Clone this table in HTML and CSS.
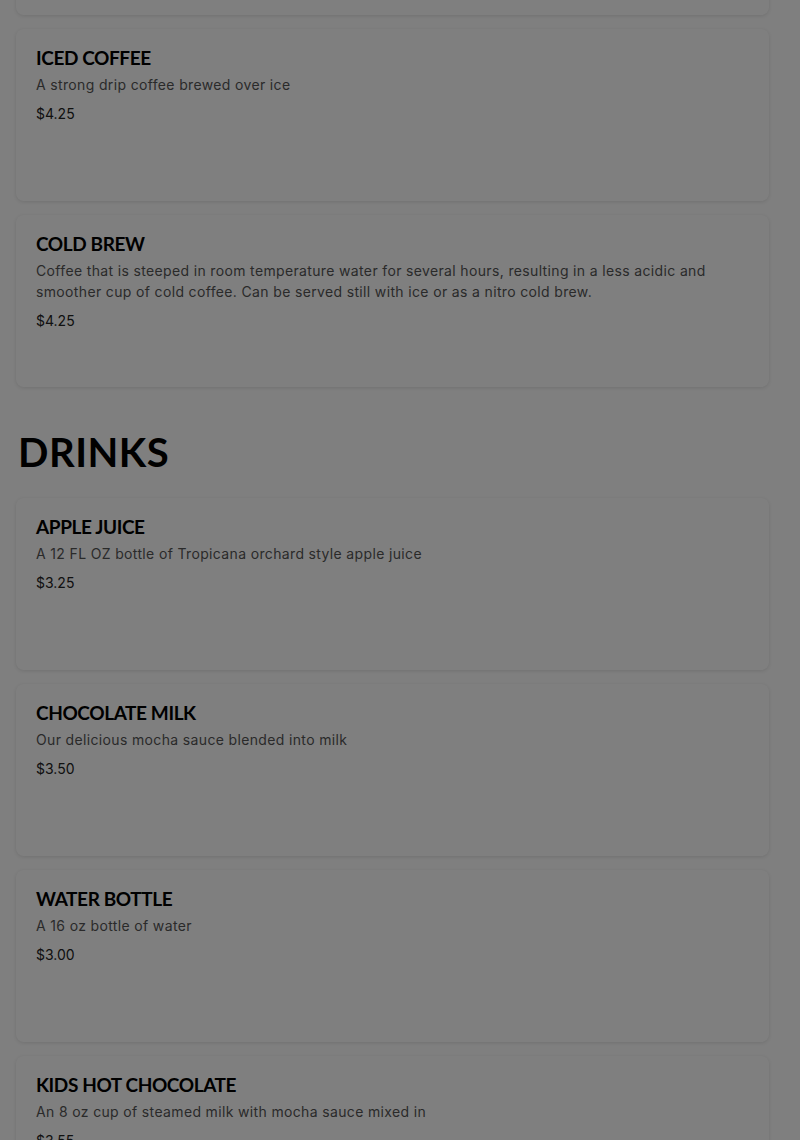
FILE: index.html
```html
<!DOCTYPE html>
<html>
<head>
<meta charset="utf-8">
<link rel="stylesheet" href="styles.css">
</head>
<body>
<main class="menu">
  <section class="section">
    <div class="cards">
      <article class="card card--clipped"></article>
      <article class="card">
        <h3 class="card-title">ICED COFFEE</h3>
        <p class="card-desc">A strong drip coffee brewed over ice</p>
        <p class="card-price">$4.25</p>
      </article>
      <article class="card">
        <h3 class="card-title">COLD BREW</h3>
        <p class="card-desc">Coffee that is steeped in room temperature water for several hours, resulting in a less acidic and smoother cup of cold coffee. Can be served still with ice or as a nitro cold brew.</p>
        <p class="card-price">$4.25</p>
      </article>
    </div>
  </section>
  <section class="section">
    <h2 class="section-title">DRINKS</h2>
    <div class="cards">
      <article class="card">
        <h3 class="card-title">APPLE JUICE</h3>
        <p class="card-desc">A 12 FL OZ bottle of Tropicana orchard style apple juice</p>
        <p class="card-price">$3.25</p>
      </article>
      <article class="card">
        <h3 class="card-title">CHOCOLATE MILK</h3>
        <p class="card-desc">Our delicious mocha sauce blended into milk</p>
        <p class="card-price">$3.50</p>
      </article>
      <article class="card">
        <h3 class="card-title">WATER BOTTLE</h3>
        <p class="card-desc">A 16 oz bottle of water</p>
        <p class="card-price">$3.00</p>
      </article>
      <article class="card">
        <h3 class="card-title">KIDS HOT CHOCOLATE</h3>
        <p class="card-desc">An 8 oz cup of steamed milk with mocha sauce mixed in</p>
        <p class="card-price">$3.55</p>
      </article>
    </div>
  </section>
</main>
<div class="overlay"></div>
</body>
</html>
```
FILE: styles.css
```css
html, body {
  margin: 0;
  padding: 0;
  background: #ffffff;
  height: 1140px;
  overflow: hidden;
}
.menu {
  width: 753px;
  margin-left: 16px;
  font-family: "Inter", "Liberation Sans", sans-serif;
}
.section-title {
  margin: 40px 0 21px 2px;
  font-family: "Lato", "Liberation Sans", sans-serif;
  font-weight: 700;
  font-size: 40px;
  line-height: 50px;
  letter-spacing: 0.5px;
  color: #000;
}
.cards {
  display: flex;
  flex-direction: column;
  gap: 14px;
}
.card {
  box-sizing: border-box;
  height: 172px;
  padding: 17px 20px;
  background: #fff;
  border-radius: 8px;
  box-shadow: 0 1px 4px rgba(0,0,0,0.12);
}
.card--clipped {
  margin-top: -157px;
}
.card-title {
  margin: 0;
  font-family: "Lato", "Liberation Sans", sans-serif;
  font-weight: 700;
  font-size: 19px;
  line-height: 23px;
  letter-spacing: -0.4px;
  color: #000;
}
.card-desc {
  margin: 5px 0 0;
  font-size: 14px;
  line-height: 21px;
  letter-spacing: 0.35px;
  color: #555;
}
.card-price {
  margin: 8px 0 0;
  font-size: 14px;
  line-height: 21px;
  color: #222;
}
.overlay {
  position: fixed;
  inset: 0;
  background: rgba(0,0,0,0.5);
}
```
